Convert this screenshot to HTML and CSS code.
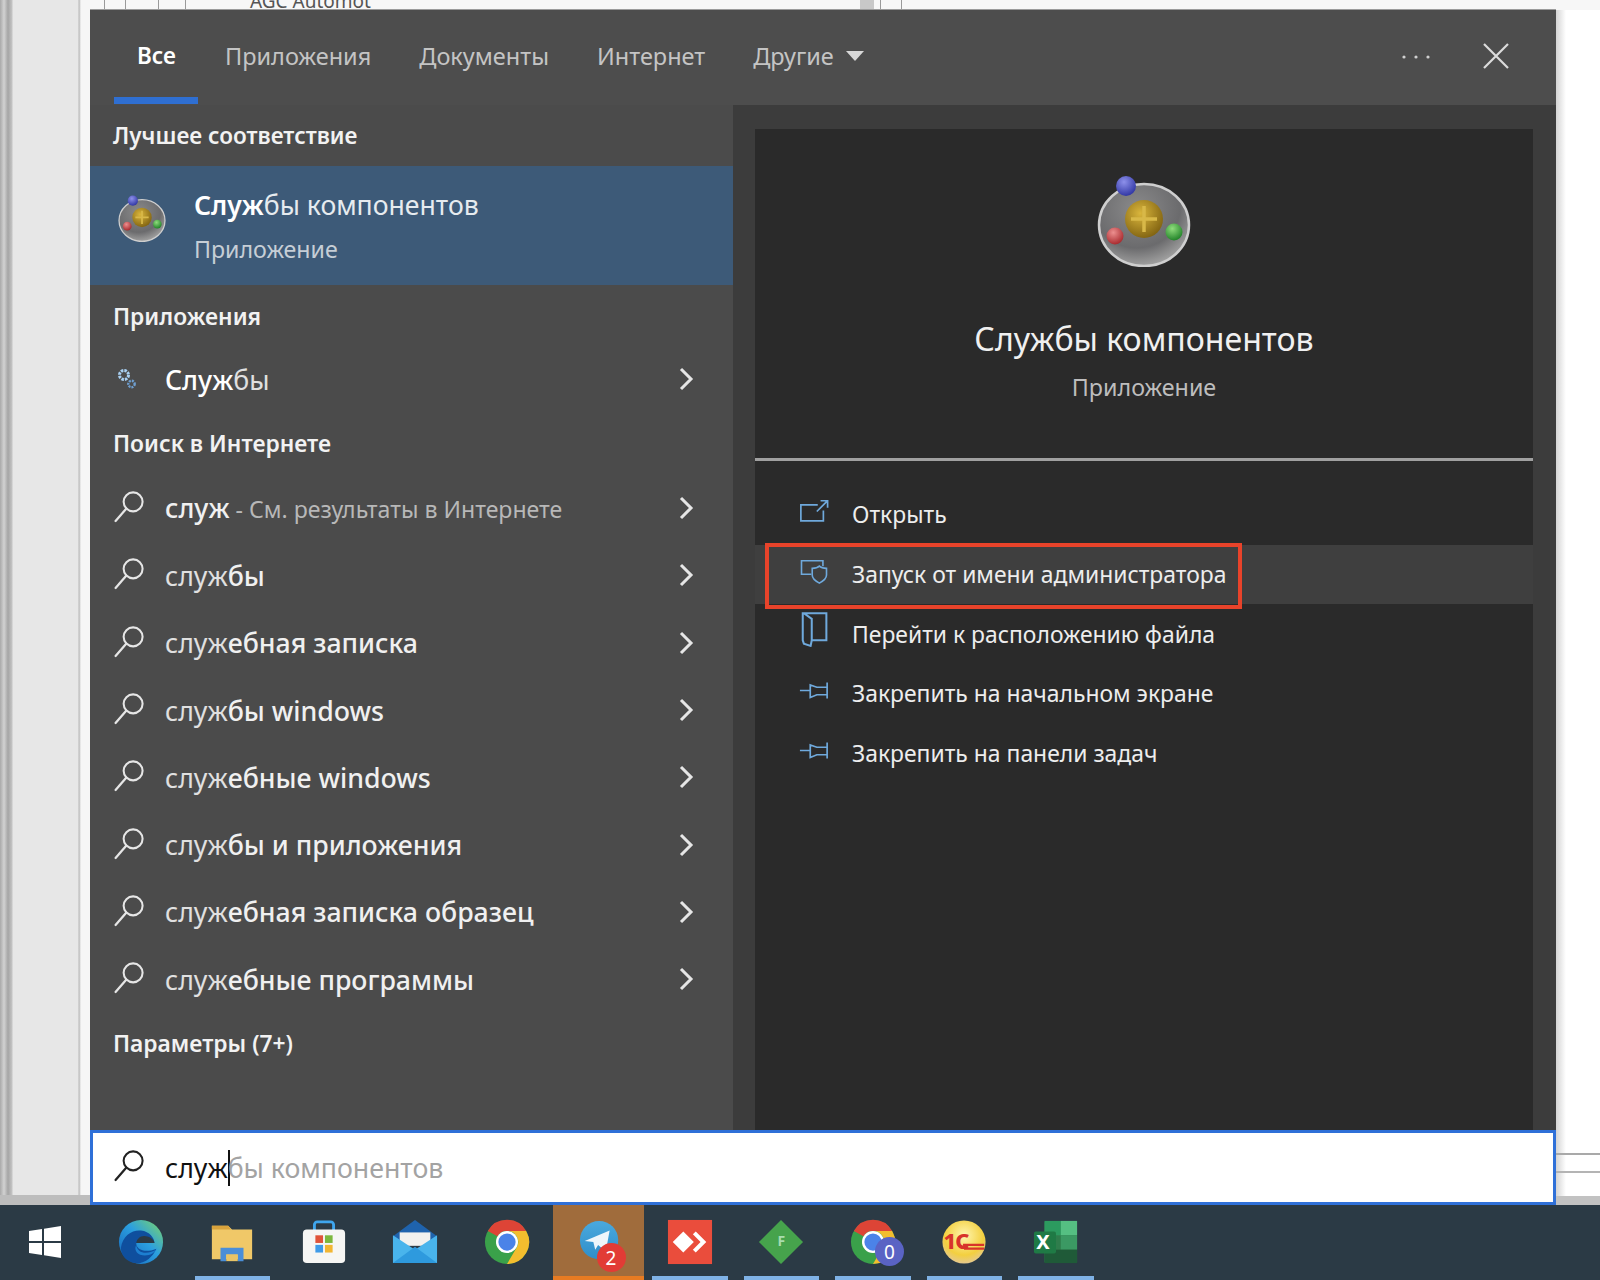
FILE: index.html
```html
<!DOCTYPE html>
<html lang="ru">
<head>
<meta charset="utf-8">
<title>Поиск</title>
<link rel="stylesheet" href="styles.css">
</head>
<body>
<svg class="defs" width="0" height="0" aria-hidden="true">
  <defs>
    <symbol id="i-search" viewBox="0 0 32 32"><circle cx="19.5" cy="11.5" r="9.2" fill="none" stroke="currentColor" stroke-width="2"/><path d="M13 18 2.5 30" fill="none" stroke="currentColor" stroke-width="2.2" stroke-linecap="round"/></symbol>
    <symbol id="i-chev" viewBox="0 0 16 24"><path d="M3 2l10 10L3 22" fill="none" stroke="currentColor" stroke-width="3"/></symbol>
    <symbol id="i-pin" viewBox="0 0 32 22"><path d="M1 11h11M12 11V5l7 2.5h11V2.500M30 2.500v17M30 15.500H19l-7 3V11" fill="none" stroke="currentColor" stroke-width="1.800"/></symbol>
    <radialGradient id="g-disc" cx=".42" cy=".3" r=".8"><stop offset="0" stop-color="#8a8a8b"/><stop offset=".6" stop-color="#6b6b6d"/><stop offset=".85" stop-color="#9b9b9b"/><stop offset="1" stop-color="#bcbcbc"/></radialGradient>
    <radialGradient id="g-gold" cx=".4" cy=".35" r=".7"><stop offset="0" stop-color="#d9b53c"/><stop offset="1" stop-color="#7f6110"/></radialGradient>
    <radialGradient id="g-blue" cx=".4" cy=".3" r=".7"><stop offset="0" stop-color="#8d90ea"/><stop offset="1" stop-color="#3238a5"/></radialGradient>
    <radialGradient id="g-red" cx=".4" cy=".3" r=".7"><stop offset="0" stop-color="#ec8f8f"/><stop offset="1" stop-color="#a92b2f"/></radialGradient>
    <radialGradient id="g-green" cx=".4" cy=".3" r=".7"><stop offset="0" stop-color="#8fdc7c"/><stop offset="1" stop-color="#23842a"/></radialGradient>
    <linearGradient id="g-edge" x1="0" y1="1" x2="1" y2="0"><stop offset="0" stop-color="#1462b8"/><stop offset=".55" stop-color="#2b9fe0"/><stop offset="1" stop-color="#7fd765"/></linearGradient>
    <linearGradient id="g-tg" x1="0" y1="0" x2="0" y2="1"><stop offset="0" stop-color="#4aa9de"/><stop offset="1" stop-color="#2f8ec9"/></linearGradient>
    <radialGradient id="g-1c" cx=".5" cy=".35" r=".65"><stop offset="0" stop-color="#fff6b0"/><stop offset=".7" stop-color="#f3cf3f"/><stop offset="1" stop-color="#e5c98e"/></radialGradient>
    <symbol id="i-comp" viewBox="0 0 96 92">
      <ellipse cx="49" cy="50" rx="45" ry="41" fill="url(#g-disc)" stroke="#cfcfcf" stroke-width="2.500"/>
      <circle cx="49" cy="44" r="19" fill="url(#g-gold)"/>
      <path d="M49 31v26M36 44h26" stroke="#d8b848" stroke-width="3.500"/>
      <circle cx="31" cy="11" r="10" fill="url(#g-blue)"/>
      <circle cx="20" cy="61" r="8.500" fill="url(#g-red)"/>
      <circle cx="79" cy="57" r="8.500" fill="url(#g-green)"/>
    </symbol>
    <symbol id="i-chrome" viewBox="0 0 48 48">
      <circle cx="24" cy="24" r="23" fill="#3aa14a"/>
      <path d="M4 12.500A23 23 0 0 1 44 12.500H24A11.500 11.500 0 0 0 14 18Z" fill="#dd4436"/>
      <path d="M44 12.500A23 23 0 0 1 24 47L34 30A11.500 11.500 0 0 0 24 12.500Z" fill="#f3bd2e"/>
      <circle cx="24" cy="24" r="11.500" fill="#fff"/><circle cx="24" cy="24" r="9" fill="#4b83e8"/>
    </symbol>
  </defs>
</svg>

<div class="desktop">
  <div class="bg-edge"></div>
  <div class="bg-top">
    <span class="bg-col bg-col-a"></span><span class="bg-col bg-col-b"></span><span class="bg-col bg-col-c"></span><span class="bg-col bg-col-d"></span>
    <span class="bg-label">AGC Automot</span>
    <span class="bg-scroll"></span><span class="bg-col bg-col-e"></span><span class="bg-col bg-col-f"></span>
  </div>
  <div class="bg-right"></div>

  <section class="search-window">
    <header class="tabs">
      <div class="tab tab-active">Все</div>
      <div class="tab">Приложения</div>
      <div class="tab">Документы</div>
      <div class="tab">Интернет</div>
      <div class="tab">Другие<svg class="caret" viewBox="0 0 18 10"><path d="M0 0h18L9 10Z" fill="currentColor"/></svg></div>
      <svg class="dots" viewBox="0 0 28 4"><circle cx="2" cy="2" r="1.600"/><circle cx="14" cy="2" r="1.600"/><circle cx="26" cy="2" r="1.600"/></svg>
      <svg class="close" viewBox="0 0 26 26"><path d="M1 1l24 24M25 1 1 25" fill="none" stroke="currentColor" stroke-width="2.200"/></svg>
    </header>

    <div class="main">
      <div class="results">
        <h2 class="heading heading-first">Лучшее соответствие</h2>
        <div class="best">
          <svg class="best-icon"><use href="#i-comp"/></svg>
          <div class="best-text">
            <div class="best-title"><b>Служ</b>бы компонентов</div>
            <div class="best-sub">Приложение</div>
          </div>
        </div>
        <h2 class="heading">Приложения</h2>
        <div class="row row-app">
          <svg class="gear" viewBox="0 0 22 24"><circle cx="8" cy="8" r="4.500" fill="none" stroke="#a9d0f2" stroke-width="3" stroke-dasharray="2.500 1"/><circle cx="15.500" cy="17" r="3.200" fill="none" stroke="#6f9fd0" stroke-width="2.400" stroke-dasharray="2 1"/></svg>
          <span class="row-text"><b>Служ</b>бы</span>
          <svg class="chev"><use href="#i-chev"/></svg>
        </div>
        <h2 class="heading">Поиск в Интернете</h2>
        <div class="row row-web">
          <svg class="mag"><use href="#i-search"/></svg>
          <span class="row-text"><b>служ</b><span class="dim"> - См. результаты в Интернете</span></span>
          <svg class="chev"><use href="#i-chev"/></svg>
        </div>
        <div class="row row-web"><svg class="mag"><use href="#i-search"/></svg><span class="row-text">служ<b>бы</b></span><svg class="chev"><use href="#i-chev"/></svg></div>
        <div class="row row-web"><svg class="mag"><use href="#i-search"/></svg><span class="row-text">служ<b>ебная записка</b></span><svg class="chev"><use href="#i-chev"/></svg></div>
        <div class="row row-web"><svg class="mag"><use href="#i-search"/></svg><span class="row-text">служ<b>бы windows</b></span><svg class="chev"><use href="#i-chev"/></svg></div>
        <div class="row row-web"><svg class="mag"><use href="#i-search"/></svg><span class="row-text">служ<b>ебные windows</b></span><svg class="chev"><use href="#i-chev"/></svg></div>
        <div class="row row-web"><svg class="mag"><use href="#i-search"/></svg><span class="row-text">служ<b>бы и приложения</b></span><svg class="chev"><use href="#i-chev"/></svg></div>
        <div class="row row-web"><svg class="mag"><use href="#i-search"/></svg><span class="row-text">служ<b>ебная записка образец</b></span><svg class="chev"><use href="#i-chev"/></svg></div>
        <div class="row row-web"><svg class="mag"><use href="#i-search"/></svg><span class="row-text">служ<b>ебные программы</b></span><svg class="chev"><use href="#i-chev"/></svg></div>
        <h2 class="heading heading-last">Параметры (7+)</h2>
      </div>

      <div class="preview-panel">
        <div class="preview">
          <div class="hero">
            <svg class="hero-icon"><use href="#i-comp"/></svg>
            <div class="hero-title">Службы компонентов</div>
            <div class="hero-sub">Приложение</div>
          </div>
          <div class="actions">
            <div class="action">
              <svg class="act-icon" viewBox="0 0 32 26"><path d="M20 6H2v17h24V12M19 13 30 2M23 1.500h7.500V9" fill="none" stroke="currentColor" stroke-width="1.800"/></svg>
              <span>Открыть</span>
            </div>
            <div class="action action-hot">
              <svg class="act-icon" viewBox="0 0 32 28"><path d="M13 17H2V2h24v6" fill="none" stroke="currentColor" stroke-width="1.800"/><path d="M22 8c2 2 5 2.500 8 2.500V18c0 4-4 7-8 9-4-2-8-5-8-9v-7.500c3 0 6-.5 8-2.500Z" fill="none" stroke="currentColor" stroke-width="1.800"/></svg>
              <span>Запуск от имени администратора</span>
              <div class="annotation"></div>
            </div>
            <div class="action">
              <svg class="act-icon act-tall" viewBox="0 0 26 32"><path d="M4 2h20v24H11l-1 5-6-2-1-3V2ZM4 2l7 5v19" fill="none" stroke="currentColor" stroke-width="1.800"/></svg>
              <span>Перейти к расположению файла</span>
            </div>
            <div class="action"><svg class="act-icon"><use href="#i-pin"/></svg><span>Закрепить на начальном экране</span></div>
            <div class="action"><svg class="act-icon"><use href="#i-pin"/></svg><span>Закрепить на панели задач</span></div>
          </div>
        </div>
      </div>
    </div>

    <div class="searchbox">
      <svg class="mag mag-dark"><use href="#i-search"/></svg>
      <span class="typed">служ</span><span class="caret-line"></span><span class="hint">бы компонентов</span>
    </div>
  </section>
</div>

<footer class="taskbar">
  <div class="task task-start">
    <svg class="ti-win" viewBox="0 0 32 32"><path d="M0 5l13-2v12H0ZM15 2.700 32 0v15H15ZM0 17h13v12L0 27ZM15 17h17v15l-17-2.700Z" fill="#fff"/></svg>
  </div>
  <div class="task">
    <svg class="ti" viewBox="0 0 48 48"><circle cx="24" cy="24" r="23" fill="url(#g-edge)"/><path d="M3 30C5 17 15 11 24 12c9 1 14 8 14 13H19c0 7 9 11 21 6-4 9-12 16-22 15C9 45 3 38 3 30Z" fill="#0f4f9e"/><path d="M19 25c1-5 5-8 10-7 5 .5 9 4 9 7Z" fill="#2b3a45"/><path d="M19 27c1 8 10 11 21 5-2 3-6 6-12 6-7 0-12-5-9-11Z" fill="#1d7fd0"/></svg>
  </div>
  <div class="task task-open">
    <svg class="ti" viewBox="0 0 48 48"><path d="M3 7h17l4 4h21v31H3Z" fill="#f0c868"/><path d="M3 7h17l3 4H3Z" fill="#d9a33c"/><path d="M12 30h24v14h-6v-7H18v7h-6Z" fill="#4a8ed8"/><path d="M18 37h12v7H18Z" fill="#e8c467"/></svg>
  </div>
  <div class="task">
    <svg class="ti" viewBox="0 0 48 48"><path d="M14 12V6a3 3 0 0 1 3-3h14a3 3 0 0 1 3 3v6" fill="none" stroke="#3fa6ee" stroke-width="3"/><rect x="2" y="11" width="44" height="35" rx="4" fill="#f6f6f4"/><path d="M15 17h8v8h-8Z" fill="#e0543a"/><path d="M25 17h8v8h-8Z" fill="#7cb83e"/><path d="M15 27h8v8h-8Z" fill="#3f9be8"/><path d="M25 27h8v8h-8Z" fill="#f2b632"/></svg>
  </div>
  <div class="task">
    <svg class="ti" viewBox="0 0 48 48"><path d="M1 18 24 1l23 17v4H1Z" fill="#1f63ad"/><path d="M8 14h32v14H8Z" fill="#f1f1ef"/><path d="M1 17l23 15 23-15v29H1Z" fill="#49b4ec"/><path d="M47 46H24L1 46 24 29l23 17Z" fill="#2e9ade"/></svg>
  </div>
  <div class="task"><svg class="ti"><use href="#i-chrome"/></svg></div>
  <div class="task task-active">
    <svg class="ti ti-tg" viewBox="0 0 48 48"><circle cx="22" cy="22" r="20" fill="url(#g-tg)"/><path d="M7 23 33 12l-4 22-8-7-3 5-2-8Z" fill="#eef6fb"/></svg>
    <span class="badge badge-red">2</span>
  </div>
  <div class="task task-open">
    <svg class="ti" viewBox="0 0 48 48"><rect x="1" y="1" width="46" height="46" fill="#ea4d3c"/><path d="M17 13l11 11-11 11L6 24Z" fill="#fff"/><path d="M30 13l11 11-11 11-3-3 8-8-8-8Z" fill="#fff"/></svg>
  </div>
  <div class="task task-open">
    <svg class="ti" viewBox="0 0 48 48"><path d="M24 1 47 24 24 47 1 24Z" fill="#46a34c"/></svg>
    <span class="ti-letter">F</span>
  </div>
  <div class="task task-open">
    <svg class="ti"><use href="#i-chrome"/></svg>
    <span class="badge badge-purple">0</span>
  </div>
  <div class="task task-open">
    <svg class="ti" viewBox="0 0 48 48"><circle cx="24" cy="24" r="22.500" fill="url(#g-1c)"/><path d="M23 27h22M24 31h21" stroke="#d8342a" stroke-width="2.400"/></svg>
    <span class="ti-1c">1С</span>
  </div>
  <div class="task task-open">
    <svg class="ti" viewBox="0 0 48 48"><rect x="12" y="2" width="34" height="44" rx="2" fill="#2f7d4c"/><rect x="12" y="2" width="17" height="15" fill="#2c9a5f"/><rect x="29" y="2" width="17" height="15" fill="#55bf82"/><rect x="29" y="17" width="17" height="15" fill="#3b9963"/><rect x="12" y="32" width="34" height="14" fill="#1f5a38"/><rect x="1" y="13" width="23" height="23" rx="2" fill="#1f7a45"/></svg>
    <span class="ti-x">X</span>
  </div>
</footer>
</body>
</html>
```
FILE: styles.css
```css
* { box-sizing: border-box; }
html, body { margin: 0; height: 100%; }
body {
  width: 1600px;
  height: 1280px;
  overflow: hidden;
  display: flex;
  flex-direction: column;
  font-family: "Noto Sans", "Open Sans", sans-serif;
  color: #e8e8e8;
  background: #f4f4f4;
}
.defs { position: absolute; }

/* desktop + windows behind */
.desktop { position: relative; flex: 1; overflow: hidden; background: #f7f7f7; }
.bg-edge {
  position: absolute; left: 0; top: 0; bottom: 0; width: 90px;
  background: linear-gradient(90deg, #a9a9a9 0, #d2d2d2 4px, #a5a5a5 8px, #c4c4c4 12px, #e7e7e7 13px, #e7e7e7 78px, #b8b8b8 79px, #f6f6f6 81px);
}
.bg-edge::after { content: ""; position: absolute; left: 0; right: 0; bottom: 0; height: 10px; background: #bdbdbd; }
.bg-top { position: absolute; left: 90px; right: 0; top: 0; height: 10px; }
.bg-col { position: absolute; top: 0; height: 10px; width: 1px; background: #9a9a9a; }
.bg-col-a { left: 14px; } .bg-col-b { left: 35px; } .bg-col-c { left: 68px; } .bg-col-d { left: 95px; }
.bg-col-e { left: 790px; } .bg-col-f { left: 811px; }
.bg-scroll { position: absolute; left: 770px; top: 0; width: 14px; height: 10px; background: #c8c8c8; }
.bg-label { position: absolute; left: 160px; top: -12px; font-size: 19px; color: #555; white-space: nowrap; }
.bg-right {
  position: absolute; left: 1556px; right: 0; top: 10px; bottom: 0;
  background: linear-gradient(180deg, transparent 1143px, #a9a9a9 1143px, #a9a9a9 1145px, transparent 1145px, transparent 1161px, #b4b4b4 1161px, #b4b4b4 1163px, transparent 1163px, transparent 1186px, #c2c2c2 1186px),
              linear-gradient(90deg, #d4d4d4, #fff 10px);
}

/* search window */
.search-window {
  position: absolute; left: 90px; top: 10px; width: 1466px; height: 1195px;
  display: flex; flex-direction: column;
  background: #3c3c3c;
  box-shadow: 0 -1px 0 #9b9b9b;
}
.tabs {
  height: 95px; flex: none;
  display: flex; align-items: stretch;
  padding-left: 24px; padding-right: 47px;
  background: #4d4d4d;
}
.tab {
  display: flex; align-items: center; gap: 12px;
  padding: 4px 24px 0;
  font-size: 23.500px; color: #c4c4c4;
  border-bottom: 7px solid transparent;
  height: 94px;
}
.tab-active { color: #fff; font-weight: 600; border-bottom-color: #2f6fd2; padding-left: 23px; padding-right: 22px; margin-right: 3px; font-size: 22.500px; }
.caret { width: 18px; height: 10px; color: #d8d8d8; }
.dots { width: 28px; height: 4px; margin-left: auto; margin-right: 53px; align-self: center; fill: #d0d0d0; margin-top: -2px; }
.close { width: 26px; height: 26px; align-self: center; color: #dcdcdc; margin-top: -4px; }

.main { flex: 1; min-height: 0; display: grid; grid-template-columns: 643px 1fr; }
.results { background: #4b4b4b; display: flex; flex-direction: column; }

.heading { margin: 0; height: 64px; flex: none; padding-left: 23px; padding-bottom: 2px; display: flex; align-items: center; font-size: 22.800px; font-weight: 600; color: #f2f2f2; }
.heading-first { height: 61px; padding-bottom: 0; font-size: 22.500px; }
.heading-last { height: 58px; padding-bottom: 0; }

.best { height: 119px; flex: none; display: flex; align-items: center; padding-left: 27px; background: #3d5a78; }
.best-icon { width: 49px; height: 47px; margin-top: -14px; }
.best-text { margin-left: 28px; display: flex; flex-direction: column; gap: 12px; }
.best-title { font-size: 26.600px; line-height: 34px; color: #e6ebef; }
.best-title b { font-weight: 600; color: #fff; }
.best-sub { font-size: 23.200px; line-height: 30px; color: #c6ced6; }

.row { flex: none; display: flex; align-items: center; padding-left: 23px; padding-right: 39px; }
.row-app { height: 63px; }
.row-web { height: 67.300px; }
.row-text { font-size: 26.700px; line-height: 34px; color: #e0e0e0; flex: 1; white-space: nowrap; margin-top: -2px; }
.row-text b { font-weight: 500; color: #f0f0f0; }
.row-app .row-text b { color: #fff; }
.dim { font-size: 23.100px; color: #b8b8b8; font-weight: 400; }
.mag { width: 33px; height: 33px; margin-right: 19px; color: #e6e6e6; flex: none; margin-top: -6px; }
.gear { width: 22px; height: 24px; margin-left: 3px; margin-right: 27px; flex: none; margin-top: -4px; }
.chev { width: 16px; height: 24px; color: #e6e6e6; flex: none; margin-top: -3px; }

.preview-panel { padding: 24px 23px 0 22px; min-height: 0; display: flex; }
.preview { flex: 1; background: #2a2a2a; display: flex; flex-direction: column; }
.hero {
  height: 332px; flex: none;
  display: flex; flex-direction: column; align-items: center;
  padding-top: 46px;
  border-bottom: 3px solid #a0a0a0;
}
.hero-icon { width: 96px; height: 92px; margin-left: -2px; }
.hero-title { font-size: 32.100px; line-height: 44px; margin-top: 50px; color: #f0f0f0; }
.hero-sub { font-size: 23.300px; line-height: 32px; margin-top: 10px; color: #bdbdbd; }

.actions { padding-top: 24px; display: flex; flex-direction: column; }
.action { position: relative; height: 59.700px; display: flex; align-items: center; padding-left: 44px; font-size: 22.900px; color: #ededed; }
.action-hot { background: #3f3f3f; }
.act-icon { width: 30px; height: 25px; margin-right: 23px; color: #6fa9dc; margin-top: -6px; flex: none; }
.act-tall { height: 36px; margin-top: -10px; }
.annotation { position: absolute; left: 10px; top: -2px; width: 477px; height: 66px; border: 4.500px solid #e8432a; }

.searchbox {
  height: 75px; flex: none;
  display: flex; align-items: center;
  padding-left: 20px;
  background: #fff;
  border: 3px solid #2f70d8;
  font-size: 26.700px;
}
.mag-dark { color: #222; margin-right: 19px; margin-top: -4px; }
.typed { color: #111; }
.caret-line { width: 2px; height: 36px; background: #111; flex: none; margin-right: -2px; }
.hint { color: #a3a3a3; }

/* taskbar */
.taskbar { height: 75px; flex: none; display: flex; background: #2b3a45; }
.task { position: relative; width: 91.500px; flex: none; display: flex; align-items: center; justify-content: center; padding-bottom: 2px; }
.task-start { width: 95px; padding-right: 6px; }
.task-open::after { content: ""; position: absolute; left: 8px; right: 8px; bottom: 0; height: 4px; background: #7fb2e6; }
.task-active { background: #a06c3c; }
.task-active::after { content: ""; position: absolute; left: 0; right: 0; bottom: 0; height: 4px; background: #e77b22; }
.ti { width: 46px; height: 46px; }
.ti-tg { margin-left: 6px; }
.ti-win { width: 32px; height: 32px; }
.badge {
  position: absolute; left: 44px; top: 38px;
  width: 29px; height: 29px; border-radius: 50%;
  display: flex; align-items: center; justify-content: center;
  font-size: 19px; color: #fff;
}
.badge-red { background: #e23b35; }
.badge-purple { background: #5a63c4; left: 48px; top: 32px; }
.ti-letter { position: absolute; left: 0; right: 0; top: 26px; text-align: center; font-size: 14px; font-weight: 700; color: #a8dcae; }
.ti-1c { position: absolute; left: 25px; top: 22px; font-size: 22px; font-weight: 800; line-height: 26px; color: #d8342a; letter-spacing: -1px; }
.ti-x { position: absolute; left: 21px; top: 24px; width: 24px; text-align: center; font-size: 20px; font-weight: 700; line-height: 26px; color: #fff; }
```
